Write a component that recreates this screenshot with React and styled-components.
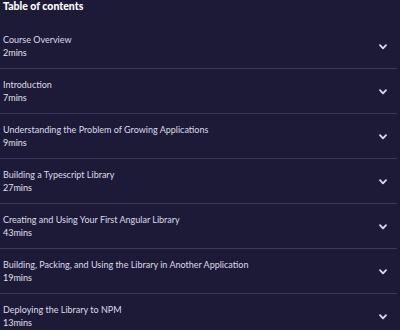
import React from "react";
import styled, { createGlobalStyle } from "styled-components";

const GlobalStyle = createGlobalStyle`
  html, body {
    margin: 0;
    padding: 0;
    background: #1d1a37;
  }
  body {
    font-family: Lato, "Liberation Sans", sans-serif;
  }
`;

const lessons = [
  { title: "Course Overview", mins: 2 },
  { title: "Introduction", mins: 7 },
  { title: "Understanding the Problem of Growing Applications", mins: 9 },
  { title: "Building a Typescript Library", mins: 27 },
  { title: "Creating and Using Your First Angular Library", mins: 43 },
  { title: "Building, Packing, and Using the Library in Another Application", mins: 19 },
  { title: "Deploying the Library to NPM", mins: 13 },
];

const Container = styled.section`
  width: 397px;
  height: 330px;
  overflow: hidden;
  background: #1d1a37;
`;

const Heading = styled.h2`
  margin: 0 0 11px;
  padding: 0 3px;
  font-size: 10.5px;
  line-height: 13px;
  font-weight: 900;
  color: #ffffff;
`;

const List = styled.ul`
  list-style: none;
  margin: 0;
  padding: 0;
`;

const Row = styled.li`
  display: flex;
  align-items: center;
  justify-content: space-between;
  height: 44px;
  padding: 0 10px 0 3px;
  border-bottom: 1px solid #3a385a;
`;

const Info = styled.div`
  display: flex;
  flex-direction: column;
`;

const Title = styled.span`
  font-size: 9px;
  line-height: 13px;
  color: #dcdce7;
`;

const Mins = styled.span`
  font-size: 9px;
  line-height: 13px;
  color: #e2e2ec;
`;

const ChevronIcon = styled.svg`
  margin-top: 2px;
  flex-shrink: 0;
`;

const Chevron = () => (
  <ChevronIcon width="8" height="6" viewBox="0 0 8 6" fill="none">
    <polyline
      points="1,1.2 4,4.3 7,1.2"
      stroke="#dcdce8"
      strokeWidth="1.8"
      strokeLinecap="round"
      strokeLinejoin="round"
    />
  </ChevronIcon>
);

function App() {
  return (
    <>
      <GlobalStyle />
      <Container>
        <Heading>Table of contents</Heading>
        <List>
          {lessons.map((lesson) => (
            <Row key={lesson.title}>
              <Info>
                <Title>{lesson.title}</Title>
                <Mins>{lesson.mins}mins</Mins>
              </Info>
              <Chevron />
            </Row>
          ))}
        </List>
      </Container>
    </>
  );
}

export default App;
